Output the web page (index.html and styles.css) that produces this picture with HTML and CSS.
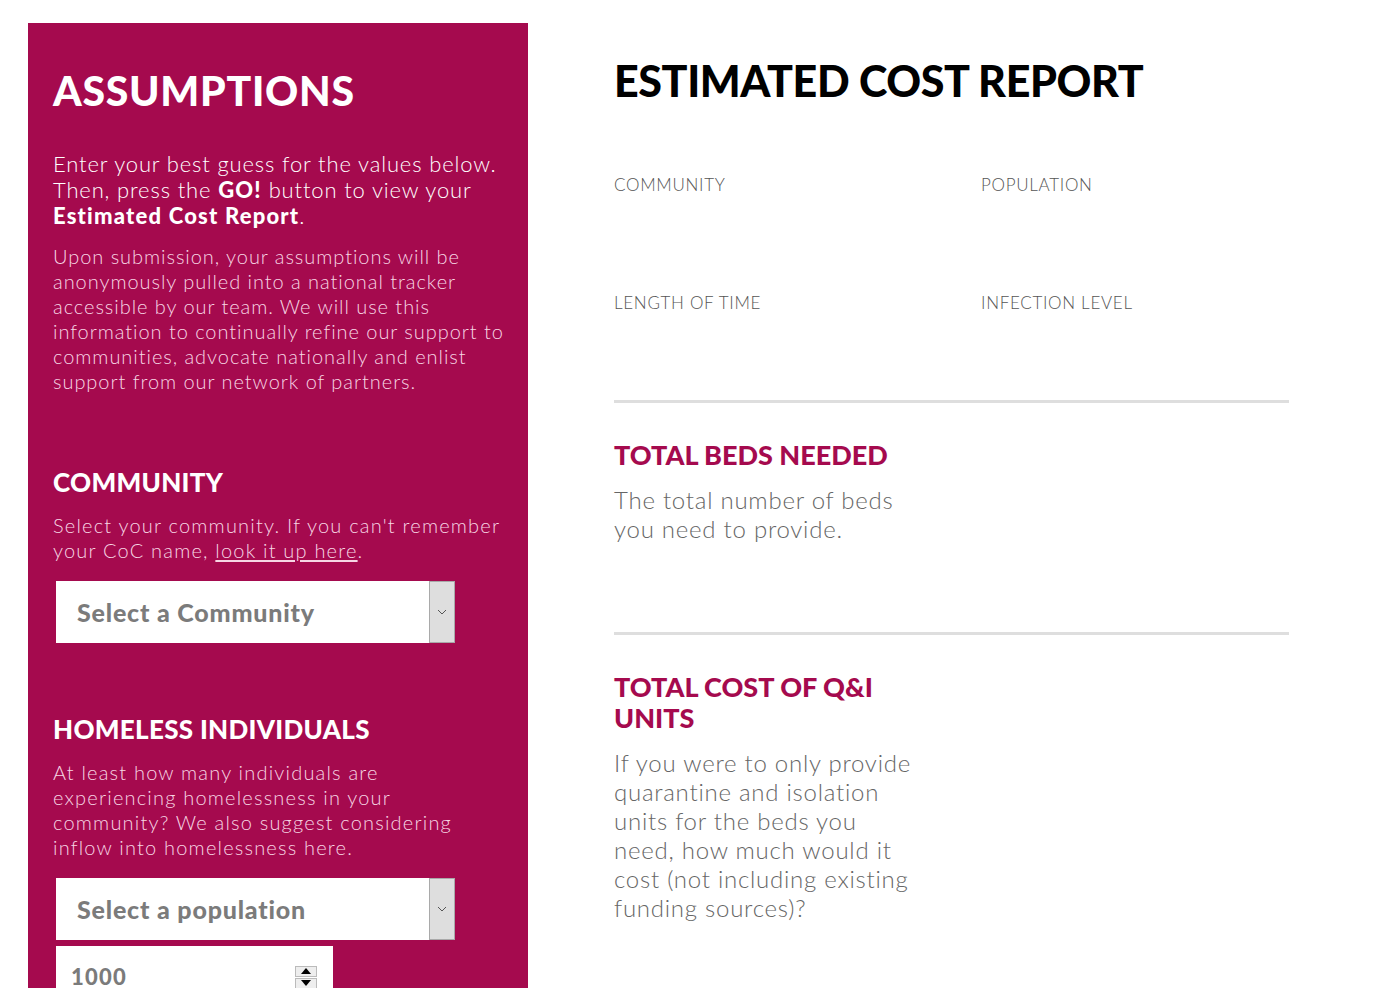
FILE: index.html
```html
<!DOCTYPE html>
<html lang="en">
<head>
<meta charset="utf-8">
<title>Estimated Cost Report</title>
<link rel="stylesheet" href="styles.css">
</head>
<body>
<div class="page">
  <aside class="panel">
    <h1 class="panel-title">ASSUMPTIONS</h1>
    <p class="intro">Enter your best guess for the values below. Then, press the <b>GO!</b> button to view your <b>Estimated Cost Report</b>.</p>
    <p class="note note-tight">Upon submission, your assumptions will be anonymously pulled into a national tracker accessible by our team. We will use this information to continually refine our support to communities, advocate nationally and enlist support from our network of partners.</p>

    <section class="field">
      <h2 class="field-title">COMMUNITY</h2>
      <p class="note">Select your community. If you can't remember your CoC name, <a href="#">look it up here</a>.</p>
      <div class="select">
        <span class="select-text">Select a Community</span>
        <span class="select-arrow"><svg width="10" height="6" viewBox="0 0 10 6"><path d="M1 1l4 4 4-4" fill="none" stroke="#555" stroke-width="1"/></svg></span>
      </div>
    </section>

    <section class="field">
      <h2 class="field-title">HOMELESS INDIVIDUALS</h2>
      <p class="note">At least how many individuals are experiencing homelessness in your community? We also suggest considering inflow into homelessness here.</p>
      <div class="select">
        <span class="select-text">Select a population</span>
        <span class="select-arrow"><svg width="10" height="6" viewBox="0 0 10 6"><path d="M1 1l4 4 4-4" fill="none" stroke="#555" stroke-width="1"/></svg></span>
      </div>
      <div class="number">
        <span class="number-text">1000</span>
        <span class="spin">
          <span class="spin-btn"><svg width="10" height="6" viewBox="0 0 10 6"><path d="M0 6L5 0 10 6z" fill="#000"/></svg></span>
          <span class="spin-btn"><svg width="10" height="6" viewBox="0 0 10 6"><path d="M0 0L5 6 10 0z" fill="#000"/></svg></span>
        </span>
      </div>
    </section>
  </aside>

  <main class="report">
    <h1 class="report-title">ESTIMATED COST REPORT</h1>
    <div class="facts">
      <div class="fact">COMMUNITY</div>
      <div class="fact">POPULATION</div>
      <div class="fact">LENGTH OF TIME</div>
      <div class="fact">INFECTION LEVEL</div>
    </div>
    <section class="result">
      <h2 class="result-title">TOTAL BEDS NEEDED</h2>
      <p class="result-desc">The total number of beds you need to provide.</p>
    </section>
    <section class="result">
      <h2 class="result-title">TOTAL COST OF Q&amp;I UNITS</h2>
      <p class="result-desc">If you were to only provide quarantine and isolation units for the beds you need, how much would it cost (not including existing funding sources)?</p>
    </section>
  </main>
</div>
</body>
</html>
```

FILE: styles.css
```css
html, body {
  margin: 0;
  padding: 0;
  background: #fff;
}
body {
  font-family: Lato, "Open Sans", sans-serif;
  overflow: hidden;
  height: 988px;
}
.page {
  display: flex;
  align-items: flex-start;
  padding: 23px 0 0 28px;
  gap: 86px;
}
.panel {
  width: 500px;
  min-height: 1000px;
  box-sizing: border-box;
  background: #a50a4e;
  color: #fff;
  padding: 42px 20px 0 25px;
}
.panel-title {
  margin: 0;
  font-weight: 900;
  font-size: 41px;
  line-height: 52px;
  letter-spacing: 0.7px;
}
.intro {
  margin: 34px 0 0;
  font-size: 22px;
  line-height: 26px;
  font-weight: 300;
  letter-spacing: 0.85px;
}
.intro b { font-weight: 900; letter-spacing: 1.2px; }
.note {
  margin: 15px 0 0;
  font-size: 20px;
  line-height: 25px;
  font-weight: 300;
  letter-spacing: 1.2px;
  color: #f7d6e4;
}
.note-tight { letter-spacing: 0.95px; }
.note a { color: inherit; text-underline-offset: 2px; }
.field { margin-top: 72px; }
.field + .field { margin-top: 70px; }
.field-title {
  margin: 0;
  font-size: 26px;
  line-height: 32px;
  font-weight: 900;
  letter-spacing: 0.3px;
}
.field .note { margin-top: 15px; }
.select {
  margin: 18px 0 0 3px;
  width: 399px;
  height: 62px;
  background: #fff;
  display: flex;
  align-items: stretch;
}
.select-text {
  flex: 1;
  display: flex;
  align-items: center;
  padding-left: 21px;
  font-weight: 900;
  font-size: 25px;
  letter-spacing: 0.8px;
  color: #7b7b7b;
}
.select-arrow {
  width: 24px;
  background: #dedede;
  border: 1px solid #a9a9a9;
  display: flex;
  align-items: center;
  justify-content: center;
}
.number {
  margin: 6px 0 0 3px;
  width: 277px;
  height: 60px;
  background: #fff;
  display: flex;
  align-items: center;
  padding: 0 16px 0 15px;
  box-sizing: border-box;
}
.number-text {
  flex: 1;
  font-weight: 900;
  font-size: 22px;
  letter-spacing: 1.2px;
  color: #7b7b7b;
  padding-top: 0;
}
.spin {
  display: flex;
  flex-direction: column;
  gap: 1px;
  margin-top: 2px;
}
.spin-btn {
  width: 20px;
  height: 9px;
  border: 1px solid #bbb;
  background: #eee;
  display: flex;
  align-items: center;
  justify-content: center;
}
.report {
  width: 675px;
  padding-top: 30px;
}
.report-title {
  margin: 0;
  font-weight: 900;
  font-size: 43px;
  line-height: 56px;
  letter-spacing: -0.4px;
  color: #000;
}
.facts {
  display: grid;
  grid-template-columns: 367px 1fr;
  row-gap: 100px;
  margin-top: 67px;
  padding-bottom: 88px;
  border-bottom: 3px solid #dedede;
}
.fact {
  font-size: 17px;
  line-height: 18px;
  font-weight: 300;
  letter-spacing: 0.7px;
  color: #555;
}
.result {
  padding: 36px 0 0;
  border-bottom: 3px solid #dedede;
  height: 232px;
  box-sizing: border-box;
}
.result + .result { border-bottom: none; }
.result-title {
  margin: 0;
  width: 300px;
  font-size: 27px;
  line-height: 31px;
  font-weight: 900;
  color: #a50a4e;
}
.result-desc {
  margin: 15px 0 0;
  width: 300px;
  font-size: 24px;
  line-height: 29px;
  font-weight: 300;
  letter-spacing: 0.75px;
  color: #666;
}
```
